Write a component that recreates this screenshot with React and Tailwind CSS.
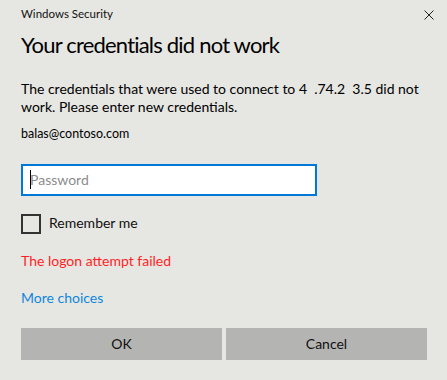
import React from "react";

export default function App() {
  return (
    <div
      className="w-full h-[380px] bg-[#e6e6e2] text-[#111] overflow-hidden"
      style={{ fontFamily: "Lato, 'Noto Sans', sans-serif" }}
    >
      <div className="pl-[21px] pr-[20px]">
        {/* Header */}
        <div className="flex items-start justify-between pt-[6px]">
          <span className="text-[11.5px] leading-[16px] text-[#111]">Windows Security</span>
          <svg
            width="10"
            height="10"
            viewBox="0 0 10 10"
            className="mt-[4px] mr-[-7px]"
          >
            <path d="M0.5 0.5 L9.5 9.5 M9.5 0.5 L0.5 9.5" stroke="#222" strokeWidth="1" fill="none" />
          </svg>
        </div>

        {/* Title */}
        <div className="mt-[9px] text-[22px] leading-[28px] tracking-[-0.8px] text-black whitespace-nowrap">
          Your credentials did not work
        </div>

        {/* Body */}
        <div className="mt-[21px] text-[14px] leading-[18px] text-black whitespace-pre-wrap">
          {"The credentials that were used to connect to 4  .74.2  3.5 did not\nwork. Please enter new credentials."}
        </div>

        <div className="mt-[10px] text-[12.5px] leading-[16px] text-black">balas@contoso.com</div>

        {/* Password field */}
        <div className="mt-[22px] w-[296px] h-[32px] border-2 border-[#0078d7] bg-white relative flex items-center pl-[7px]">
          <span className="text-[14px] leading-[20px] text-[#8c8c8c]">Password</span>
          <span className="absolute left-[7px] top-[4px] w-px h-[19px] bg-black" />
        </div>

        {/* Remember me */}
        <div className="mt-[18px] flex items-start gap-[8px]">
          <div className="w-[20px] h-[20px] border-2 border-[#333] shrink-0" />
          <span className="text-[14px] leading-[18px] text-[#111]">Remember me</span>
        </div>

        {/* Error */}
        <div className="mt-[17px] text-[14px] leading-[20px] text-[#ff1f1f]">The logon attempt failed</div>

        {/* More choices */}
        <div className="mt-[17px] text-[14px] leading-[20px] text-[#0f86de]">More choices</div>

        {/* Buttons */}
        <div className="mt-[20px] grid grid-cols-2 gap-[4px]">
          <div className="h-[32px] bg-[#b4b4b2] flex items-center justify-center text-[14px] leading-[20px] text-[#111]">
            OK
          </div>
          <div className="h-[32px] bg-[#b4b4b2] flex items-center justify-center text-[14px] leading-[20px] text-[#111]">
            Cancel
          </div>
        </div>
      </div>
    </div>
  );
}
